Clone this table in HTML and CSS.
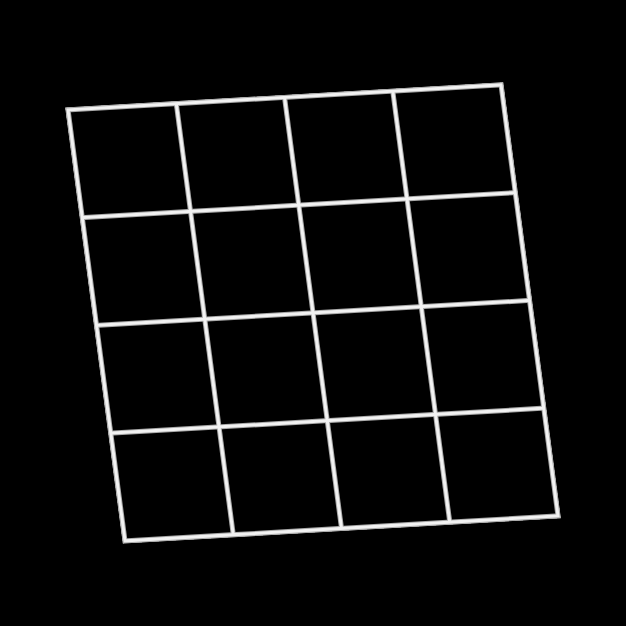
FILE: index.html
```html
<!DOCTYPE html>
<html lang="en">
<head>
<meta charset="utf-8">
<title>Grid</title>
<link rel="stylesheet" href="styles.css">
</head>
<body>
<div class="stage">
  <div class="grid">
    <div class="cell"></div><div class="cell"></div><div class="cell"></div><div class="cell"></div>
    <div class="cell"></div><div class="cell"></div><div class="cell"></div><div class="cell"></div>
    <div class="cell"></div><div class="cell"></div><div class="cell"></div><div class="cell"></div>
    <div class="cell"></div><div class="cell"></div><div class="cell"></div><div class="cell"></div>
  </div>
</div>
</body>
</html>
```
FILE: styles.css
```css
html, body {
  margin: 0;
  padding: 0;
  background: #000;
}
.stage {
  width: 626px;
  height: 626px;
  overflow: hidden;
  background: #000;
}
.grid {
  width: 437px;
  height: 437px;
  box-sizing: border-box;
  padding: 5px;
  display: grid;
  grid-template-columns: repeat(4, 1fr);
  grid-template-rows: repeat(4, 1fr);
  gap: 5px;
  background: #f2f2f2;
  box-shadow: inset 0 0 0 1px #a8a8a8;
  transform-origin: 0 0;
  transform: matrix(1.0023, -0.0579, 0.1319, 0.9977, 65.2, 107.6);
}
.cell {
  background: #000;
  box-shadow: 0 0 0 1px #a8a8a8;
}
```
